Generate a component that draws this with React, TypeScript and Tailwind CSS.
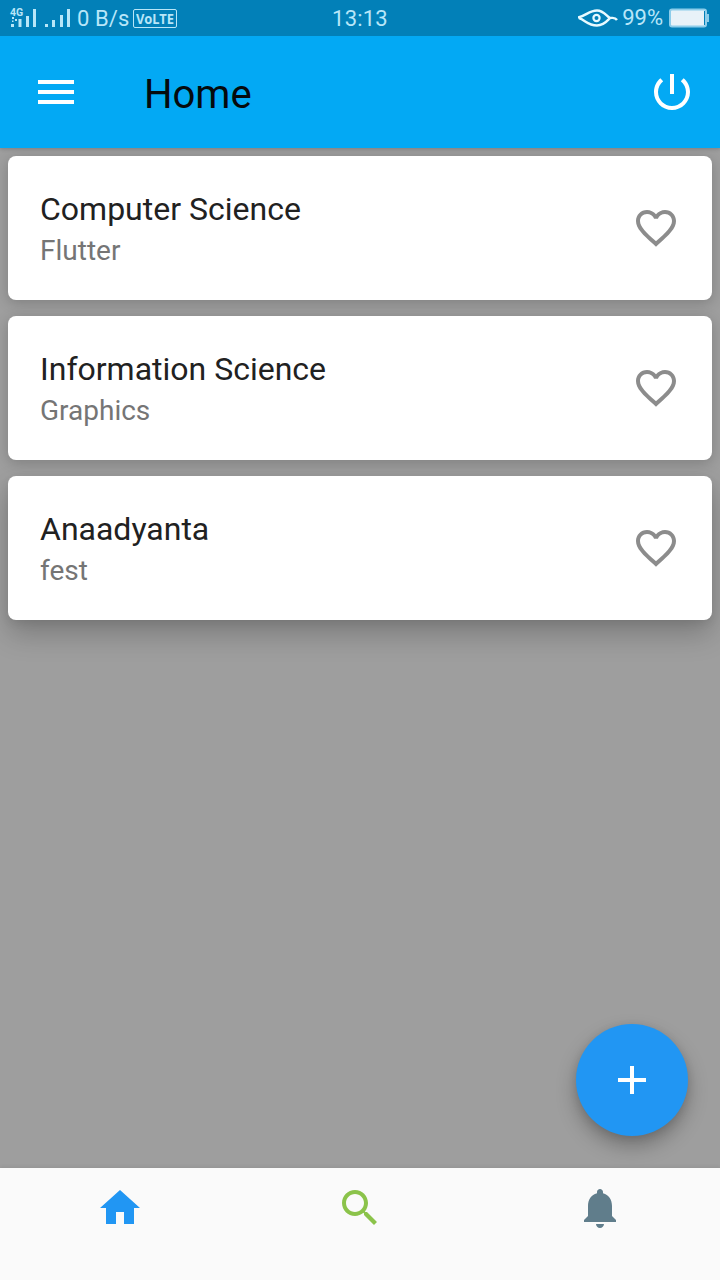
import React from 'react';

const items = [
  { title: 'Computer Science', subtitle: 'Flutter' },
  { title: 'Information Science', subtitle: 'Graphics' },
  { title: 'Anaadyanta', subtitle: 'fest' },
];

function Icon({ d, className = '' }: { d: string; className?: string }) {
  return (
    <svg viewBox="0 0 24 24" fill="currentColor" className={`size-12 shrink-0 ${className}`}>
      <path d={d} />
    </svg>
  );
}

const MENU = 'M3 18h18v-2H3v2zm0-5h18v-2H3v2zm0-7v2h18V6H3z';
const POWER =
  'M13 3h-2v10h2V3zm4.83 2.17l-1.42 1.42C17.99 7.86 19 9.81 19 12c0 3.87-3.13 7-7 7s-7-3.13-7-7c0-2.19 1.01-4.14 2.58-5.42L6.17 5.17C4.23 6.82 3 9.26 3 12c0 4.97 4.03 9 9 9s9-4.03 9-9c0-2.74-1.23-5.18-3.17-6.83z';
const HEART =
  'M16.5 3c-1.74 0-3.41.81-4.5 2.09C10.91 3.81 9.24 3 7.5 3 4.42 3 2 5.42 2 8.5c0 3.78 3.4 6.86 8.55 11.54L12 21.35l1.45-1.32C18.6 15.36 22 12.28 22 8.5 22 5.42 19.58 3 16.5 3zm-4.4 15.55l-.1.1-.1-.1C7.14 14.24 4 11.39 4 8.5 4 6.5 5.5 5 7.5 5c1.54 0 3.04.99 3.57 2.36h1.87C13.46 5.99 14.96 5 16.5 5c2 0 3.5 1.5 3.5 3.5 0 2.89-3.14 5.74-7.9 10.05z';
const ADD = 'M19 13h-6v6h-2v-6H5v-2h6V5h2v6h6v2z';
const HOME = 'M10 20v-6h4v6h5v-8h3L12 3 2 12h3v8z';
const SEARCH =
  'M15.5 14h-.79l-.28-.27C15.41 12.59 16 11.11 16 9.5 16 5.91 13.09 3 9.5 3S3 5.91 3 9.5 5.91 16 9.5 16c1.61 0 3.09-.59 4.23-1.57l.27.28v.79l5 4.99L20.49 19l-4.99-5zm-6 0C7.01 14 5 11.99 5 9.5S7.01 5 9.5 5 14 7.01 14 9.5 11.99 14 9.5 14z';
const BELL =
  'M12 22c1.1 0 2-.9 2-2h-4c0 1.1.89 2 2 2zm6-6v-5c0-3.07-1.64-5.64-4.5-6.32V4c0-.83-.67-1.5-1.5-1.5s-1.5.67-1.5 1.5v.68C7.63 5.36 6 7.92 6 11v5l-2 2v1h16v-1l-2-2z';

function StatusBar() {
  return (
    <div className="grid h-9 grid-cols-[1fr_auto_1fr] items-center bg-[#0280b8] text-[22px] leading-8 text-[#b8e6f8]">
      <div className="flex items-center pl-[9px]">
        <svg viewBox="0 0 28 24" className="h-6 w-7" fill="currentColor">
          <text x="1" y="9.5" fontSize="10.5" fontWeight="700" className="font-['Roboto',sans-serif]">4G</text>
          <path d="M2 18h3v3H2zM9.5 13h3v8h-3zM17 10h3v11h-3zM24 3h3v18h-3zM3 11h2v2H3zM6 13h2v2H6zM3 14.500h1.500v1.500H3z" />
        </svg>
        <svg viewBox="0 0 26 24" className="ml-2 h-6 w-[26px]" fill="currentColor">
          <path d="M0 18h3v3H0zM7 14h3v7H7zM15 9h3v12h-3zM22 3h3v18h-3z" />
        </svg>
        <span className="ml-[6px] w-[53px] pt-0.5 whitespace-nowrap tracking-[0.1px]">0 B/s</span>
        <span className="ml-[3px] flex h-[19px] w-11 items-center justify-center rounded-[2px] border-[1.5px] border-[#b8e6f8] font-['Noto_Sans',sans-serif] text-[15px] leading-none font-bold">
          <span className="scale-x-[0.86]">VoLTE</span>
        </span>
      </div>
      <span className="pt-0.5 tracking-[0.2px]">13:13</span>
      <div className="flex items-center justify-end pr-[10px]">
        <svg viewBox="0 0 40 20" className="h-5 w-10" fill="none" stroke="#e8faff" strokeWidth="2.4">
          <path d="M0 9.500C8 8 11 2.500 19 2.500c7 0 10 6.500 13 7.500 3 0 5-1 7 2" />
          <path d="M1 10c6 2 9 7.500 18 7.500 7 0 10-4.500 13-7.500" />
          <circle cx="18.500" cy="10" r="3.1" strokeWidth="2.2" />
        </svg>
        <span className="mr-[6px] ml-1">99%</span>
        <svg viewBox="0 0 41 20" className="h-5 w-[41px]">
          <rect x="1" y="1.5" width="36" height="17" rx="2" fill="#e8f2f8" stroke="#8dcdea" strokeWidth="2" />
          <path d="M35.5 3v14" stroke="#0280b8" strokeWidth="1" />
          <path d="M38 6h2v8h-2z" fill="#8dcdea" />
        </svg>
      </div>
    </div>
  );
}

export default function App() {
  return (
    <div className="relative flex h-[1280px] w-[720px] flex-col overflow-hidden bg-[#9e9e9e] font-['Roboto',sans-serif]">
      <header className="relative z-10 shadow-[0_1px_4px_rgba(0,0,0,0.2)]">
        <StatusBar />
        <div className="flex h-28 items-center bg-[#03a9f4] pr-6 pl-8 text-white">
          <Icon d={MENU} />
          <h1 className="ml-16 pt-1.5 text-[40px] leading-none font-normal text-[#050a0d]">Home</h1>
          <Icon d={POWER} className="ml-auto" />
        </div>
      </header>

      <main className="flex flex-1 flex-col gap-4 px-2 pt-2">
        {items.map((item) => (
          <div
            key={item.title}
            className="flex h-36 items-center justify-between rounded-lg bg-white px-8 shadow-[0_3px_14px_rgba(0,0,0,0.2)] last:shadow-[0_14px_28px_rgba(0,0,0,0.22),0_3px_10px_rgba(0,0,0,0.08)]"
          >
            <div className="flex flex-col pt-[3px]">
              <span className="text-[32px] leading-[38px] text-[#212121]">{item.title}</span>
              <span className="mt-[5px] text-[28px] leading-9 text-[#757575]">{item.subtitle}</span>
            </div>
            <Icon d={HEART} className="text-[#8c8c8c]" />
          </div>
        ))}
      </main>

      <button
        aria-label="Add"
        className="absolute right-8 bottom-36 flex size-28 items-center justify-center rounded-full bg-[#2196f3] text-white shadow-[0_10px_20px_rgba(0,0,0,0.28),0_2px_8px_rgba(0,0,0,0.1)]"
      >
        <Icon d={ADD} />
      </button>

      <nav className="relative grid h-28 grid-cols-3 justify-items-center bg-[#fafafa] pt-4 shadow-[0_-1px_4px_rgba(0,0,0,0.08)]">
        <Icon d={HOME} className="text-[#2196f3]" />
        <Icon d={SEARCH} className="text-[#8bc34a]" />
        <Icon d={BELL} className="text-[#607d8b]" />
      </nav>
    </div>
  );
}
